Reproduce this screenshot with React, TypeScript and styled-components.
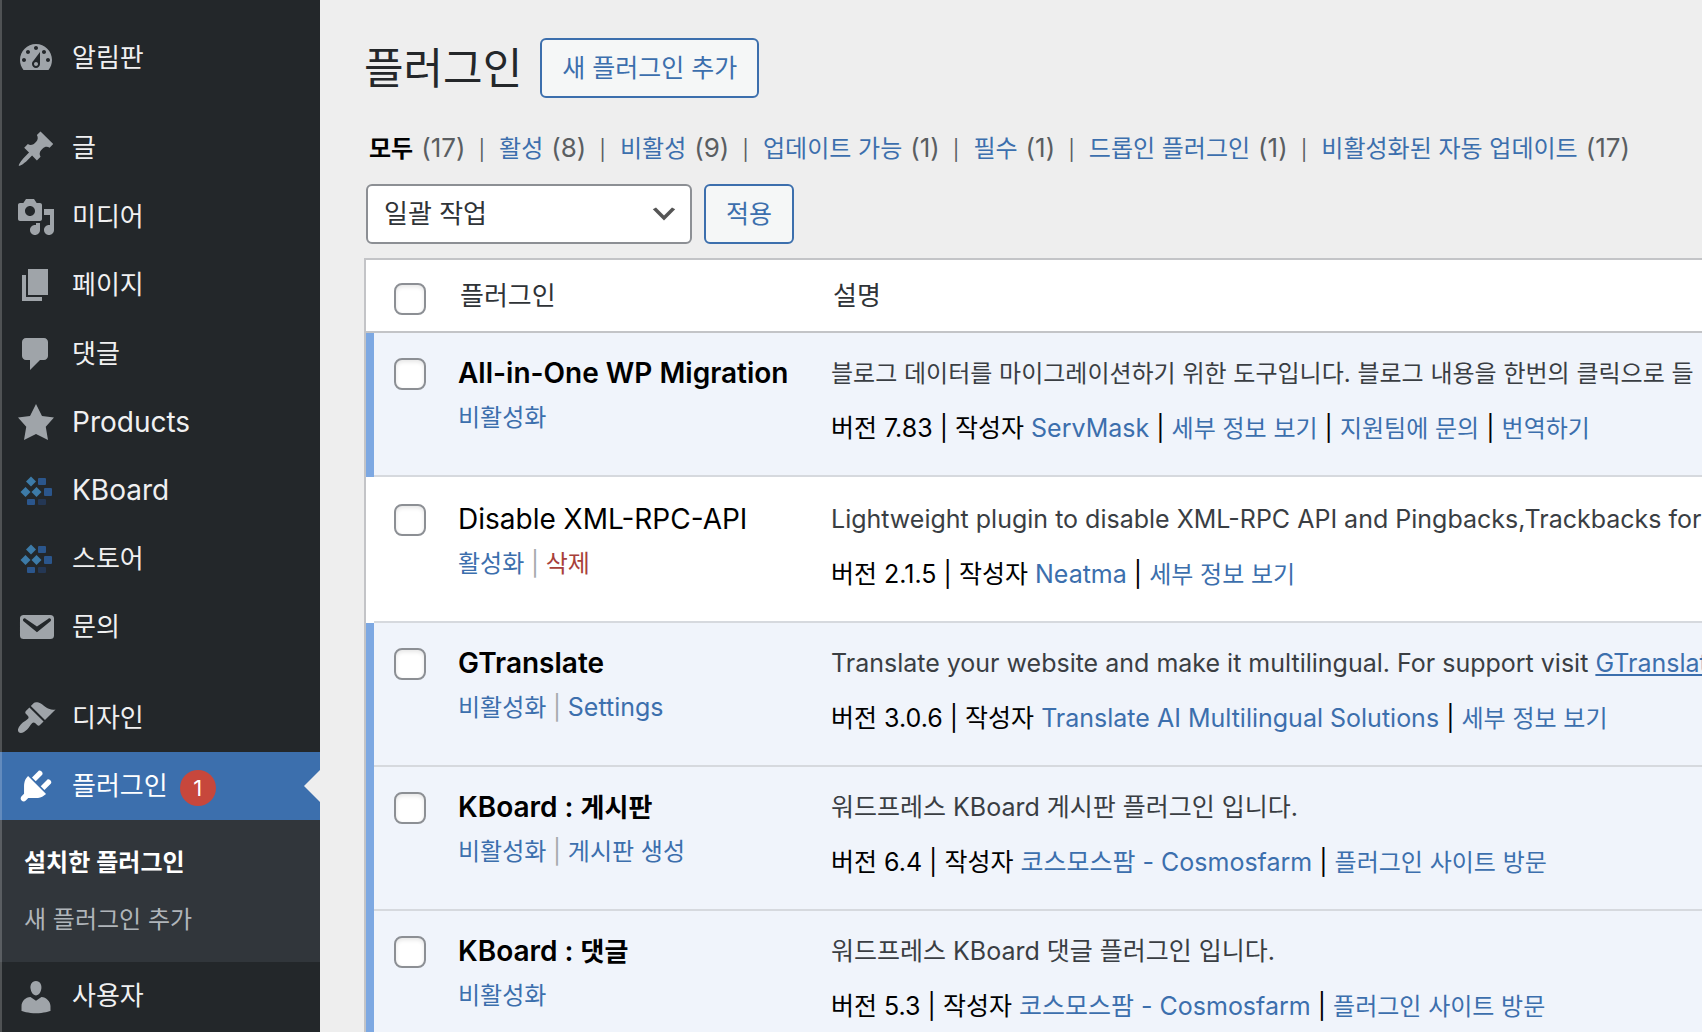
import React from "react";
import styled, { createGlobalStyle, css } from "styled-components";

const family = `Inter, "Noto Sans CJK KR", sans-serif`;

const GlobalStyle = createGlobalStyle`
  *, *::before, *::after { box-sizing: border-box; }
  html, body { margin: 0; }
  body {
    background: #eeeeee;
    color: #3a3e43;
    font-family: ${family};
    font-size: 25px;
    line-height: 39px;
    overflow: hidden;
  }
  a { text-decoration: none; }
`;

const Page = styled.div`
  display: flex;
  height: 100vh;
  overflow: hidden;
`;

const Sidebar = styled.nav`
  position: relative;
  flex: 0 0 320px;
  padding-top: 24px;
  background: #23272a;
  overflow: hidden;

  &::after {
    content: "";
    position: absolute;
    inset: 0 auto 0 0;
    width: 2px;
    background: rgba(255, 255, 255, 0.2);
  }
`;

const MenuList = styled.ul`
  list-style: none;
  margin: 0;
  padding: 0;
`;

const MenuItem = styled.li<{ $spaced?: boolean }>`
  margin-top: ${(p) => (p.$spaced ? "22px" : "0")};
`;

const MenuLink = styled.a<{ $current?: boolean }>`
  position: relative;
  display: flex;
  align-items: center;
  gap: 16px;
  padding: 16px;
  font-size: 28px;
  line-height: 1.3em;
  color: ${(p) => (p.$current ? "#ffffff" : "#f0f0f1")};
  background: ${(p) => (p.$current ? "#3c6fad" : "transparent")};

  svg {
    flex: none;
    width: 40px;
    height: 40px;
    margin: -2px 0;
    fill: ${(p) => (p.$current ? "#ffffff" : "#9fa4a9")};
  }

  ${(p) =>
    p.$current &&
    css`
      &::after {
        content: "";
        position: absolute;
        right: 0;
        top: 50%;
        margin-top: -16px;
        border: 16px solid transparent;
        border-left-width: 0;
        border-right-color: #eeeeee;
      }
    `}
`;

const MenuText = styled.span<{ $latin?: boolean }>`
  font-size: ${(p) => (p.$latin ? "28px" : "26px")};
`;

const Badge = styled.span`
  display: grid;
  place-items: center;
  width: 36px;
  height: 36px;
  margin: 2px 0 -2px -4px;
  border-radius: 50%;
  background: #c7473c;
  color: #fff;
  font-size: 22px;
`;

const Submenu = styled.ul`
  list-style: none;
  margin: 0;
  padding: 14px 0;
  background: #31363b;
`;

const SubLink = styled.a<{ $current?: boolean }>`
  display: block;
  padding: 9px 24px;
  font-size: 24px;
  line-height: 39px;
  font-weight: ${(p) => (p.$current ? 600 : 400)};
  color: ${(p) => (p.$current ? "#ffffff" : "#b0b5ba")};
`;

const Main = styled.main`
  flex: 1;
  min-width: 0;
  padding: 38px 0 0 44px;
  overflow: hidden;
`;

const Heading = styled.header`
  display: flex;
  align-items: center;
  gap: 18px;
`;

const Title = styled.h1`
  margin: 0;
  font-size: 43px;
  line-height: 60px;
  font-weight: 400;
  color: #24272a;
`;

const ActionButton = styled.button`
  height: 60px;
  padding: 0 20px;
  border: 2px solid #3c6fad;
  border-radius: 6px;
  background: #f5f7f7;
  color: #3c6fad;
  font: 25px/36px ${family};
`;

const Filters = styled.ul`
  display: flex;
  list-style: none;
  margin: 31px 0 16px;
  padding: 0 0 0 5px;
  white-space: nowrap;
  font-size: 24px;
  color: #5a5e62;

  li + li::before {
    content: "|";
    margin: 0 14px 0 13px;
    font-size: 20px;
    line-height: 1;
  }
`;

const FilterLink = styled.a<{ $current?: boolean }>`
  margin-right: 8px;
  color: ${(p) => (p.$current ? "#000000" : "#3c6fad")};
  font-weight: ${(p) => (p.$current ? 600 : 400)};
`;

const Count = styled.span`
  font-size: 26px;
  line-height: 1;
`;

const Bulk = styled.form`
  display: flex;
  gap: 12px;
  margin: 0 0 14px 2px;
`;

const SelectBox = styled.div`
  position: relative;
  width: 326px;

  svg {
    position: absolute;
    right: 12px;
    top: 14px;
    width: 32px;
    height: 32px;
    fill: #555555;
    pointer-events: none;
  }
`;

const Select = styled.select`
  appearance: none;
  width: 100%;
  height: 60px;
  padding: 0 48px 0 16px;
  border: 2px solid #8c8f94;
  border-radius: 6px;
  background: #ffffff;
  color: #2f3337;
  font: 26px/56px ${family};
`;

const Table = styled.table`
  width: 100%;
  table-layout: fixed;
  border-collapse: separate;
  border-spacing: 0;
  border: 2px solid #c3c4c7;
  border-right: 0;
  background: #ffffff;
  white-space: nowrap;
`;

const CheckCol = styled.col`
  width: 72px;
`;

const NameCol = styled.col`
  width: 373px;
`;

const HeadCell = styled.th`
  height: 73px;
  padding: 0 0 0 22px;
  border-bottom: 2px solid #c3c4c7;
  text-align: left;
  vertical-align: middle;
  font-size: 26px;
  font-weight: 400;
  color: #2f3337;
`;

const HeadCheck = styled(HeadCell)`
  padding: 6px 0 0 28px;
`;

const CheckCell = styled.th`
  padding: 25px 0 29px 20px;
  text-align: left;
  vertical-align: top;
`;

const Cell = styled.td`
  padding: 21px 0 29px 20px;
  vertical-align: top;
  overflow: hidden;
`;

const Row = styled.tr<{ $active: boolean }>`
  background: ${(p) => (p.$active ? "#f0f4fb" : "#ffffff")};

  && > * {
    border-top: ${(p) => (p.$active ? "0" : "2px solid #ffffff")};
    box-shadow: inset 0 -2px 0 #d6d9de;
  }

  && > ${CheckCell} {
    border-left: 8px solid ${(p) => (p.$active ? "#7da8e2" : "#ffffff")};
  }
`;

const Check = styled.input`
  appearance: none;
  display: block;
  width: 32px;
  height: 32px;
  margin: 0;
  border: 2px solid #8c8f94;
  border-radius: 8px;
  background: #ffffff;
  box-shadow: inset 0 2px 4px rgba(0, 0, 0, 0.1);
`;

const Name = styled.strong<{ $active: boolean }>`
  display: block;
  margin-bottom: 5px;
  font-size: 28px;
  font-weight: ${(p) => (p.$active ? 600 : 400)};
  color: #000000;
`;

const NameKorean = styled.span`
  font-size: 26px;
  line-height: 1;
`;

const Actions = styled.div`
  font-size: 24px;
  color: #a7aaad;
`;

/* Hangul is drawn larger than Latin at the same size, so all-Korean text is set one step down. */
const textSize = (text: string) => (/[A-Za-z]/.test(text) ? "25px" : "24px");

const Link = styled.a<{ $size: string; $danger?: boolean; $underline?: boolean }>`
  font-size: ${(p) => p.$size};
  line-height: 1;
  color: ${(p) => (p.$danger ? "#a8403a" : "#3c6fad")};
  text-decoration: ${(p) => (p.$underline ? "underline" : "none")};
`;

const Desc = styled.p<{ $size: string }>`
  margin: 0 0 16px;
  font-size: ${(p) => p.$size};
  color: #3a3e43;
`;

const Meta = styled.div`
  color: #000000;
`;

const paths = {
  dashboard:
    "M3.76 16h12.48c1.1-1.37 1.76-3.11 1.76-5 0-4.42-3.58-8-8-8s-8 3.58-8 8c0 1.89.66 3.63 1.76 5zM10 4c.55 0 1 .45 1 1s-.45 1-1 1-1-.45-1-1 .45-1 1-1zM6 6c.55 0 1 .45 1 1s-.45 1-1 1-1-.45-1-1 .45-1 1-1zm8 0c.55 0 1 .45 1 1s-.45 1-1 1-1-.45-1-1 .45-1 1-1zm-5.37 5.55L12 7v6c0 1.1-.9 2-2 2s-2-.9-2-2c0-.57.24-1.08.63-1.45zM4 10c.55 0 1 .45 1 1s-.45 1-1 1-1-.45-1-1 .45-1 1-1zm12 0c.55 0 1 .45 1 1s-.45 1-1 1-1-.45-1-1 .45-1 1-1zm-5 3c0-.55-.45-1-1-1s-1 .45-1 1 .45 1 1 1 1-.45 1-1z",
  pin: "M10.44 3.02l1.82-1.82 6.36 6.35-1.83 1.82c-1.05-.68-2.48-.57-3.41.36l-.75.75c-.92.93-1.04 2.35-.35 3.41l-1.83 1.82-2.41-2.41-2.8 2.79c-.42.42-3.38 2.71-3.8 2.29s1.86-3.39 2.28-3.81l2.79-2.79L4.1 9.36l1.83-1.82c1.05.69 2.48.57 3.4-.36l.75-.75c.93-.92 1.05-2.35.36-3.41z",
  media:
    "M13 11V4c0-.55-.45-1-1-1h-1.67L9 1H5L3.67 3H2c-.55 0-1 .45-1 1v7c0 .55.45 1 1 1h10c.55 0 1-.45 1-1zM7 4.5c1.38 0 2.5 1.12 2.5 2.5S8.38 9.5 7 9.5 4.5 8.38 4.5 7 5.62 4.5 7 4.5zM14 6h5v10.5c0 1.38-1.12 2.5-2.5 2.5S14 17.88 14 16.5s1.12-2.5 2.5-2.5c.17 0 .34.02.5.05V9h-3V6zm-4 8.05V13h2v3.5c0 1.38-1.12 2.5-2.5 2.5S7 17.88 7 16.5 8.12 14 9.5 14c.17 0 .34.02.5.05z",
  page: "M6 15V2h10v13H6zm-1 1h8v2H3V5h2v11z",
  comment:
    "M5 2h9c1.1 0 2 .9 2 2v7c0 1.1-.9 2-2 2h-2l-5 5v-5H5c-1.1 0-2-.9-2-2V4c0-1.1.9-2 2-2z",
  star: "M10 1l3 6 6 .75-4.12 4.62L16 19l-6-3-6 3 1.13-6.63L1 7.75 7 7z",
  email:
    "M3.87 4h13.25C18.37 4 19 4.59 19 5.79v8.42c0 1.19-.63 1.79-1.88 1.79H3.87c-1.25 0-1.88-.6-1.88-1.79V5.79c0-1.2.63-1.79 1.88-1.79zm6.62 8.6l6.74-5.53c.24-.2.43-.66.13-1.07-.29-.41-.82-.42-1.17-.17l-5.7 3.86L4.8 5.83c-.35-.25-.88-.24-1.17.17-.3.41-.11.87.13 1.07z",
  brush:
    "M14.48 11.06L7.41 3.99l1.5-1.5c.5-.56 2.3-.47 3.51.32 1.21.8 1.43 1.28 2.91 2.1 1.18.64 2.45 1.26 4.45.85zm-.71.71L6.7 4.7 4.93 6.47c-.39.39-.39 1.02 0 1.41l1.06 1.06c.39.39.39 1.03 0 1.42-.6.6-1.43 1.11-2.21 1.69-.35.26-.7.53-1.01.84C1.43 14.23.4 16.08 1.4 17.07c.99 1 2.84-.03 4.18-1.36.31-.31.58-.66.85-1.02.57-.78 1.08-1.61 1.69-2.21.39-.39 1.02-.39 1.41 0l1.06 1.06c.39.39 1.02.39 1.41 0z",
  plug: "M13.11 4.36L9.87 7.6 8 5.73l3.24-3.24c.35-.34 1.05-.2 1.56.32.52.51.66 1.21.31 1.55zm-8 1.77l.91-1.12 9.01 9.01-1.19.84c-.71.71-2.63 1.16-3.82 1.16H6.14L4.9 17.26c-.59.59-1.54.59-2.12 0-.59-.58-.59-1.53 0-2.12l1.24-1.24v-3.88c0-1.13.4-3.19 1.09-3.89zm7.26 3.97l3.24-3.24c.34-.35 1.04-.21 1.55.31.52.51.66 1.21.31 1.55l-3.24 3.25z",
  user: "M10 9.25c-2.27 0-2.73-3.44-2.73-3.44C7 4.02 7.82 2 9.97 2c2.16 0 2.98 2.02 2.71 3.81 0 0-.41 3.44-2.68 3.44zm0 2.57L12.72 10c2.39 0 4.52 2.33 4.52 4.53v2.49s-3.65 1.13-7.24 1.13c-3.65 0-7.24-1.13-7.24-1.13v-2.49c0-2.25 1.94-4.48 4.47-4.48z",
};

type IconName = keyof typeof paths | "kboard";

function Icon({ name }: { name: IconName }) {
  if (name === "kboard") {
    return (
      <svg viewBox="0 0 40 40" aria-hidden="true">
        <g fill="#3d7ba8">
          <path d="M15 5.500l5 5-5 5-5-5z" />
          <path d="M9.500 16l5 5-5 5-5-5z" />
          <path d="M20.500 16l5 5-5 5-5-5z" />
        </g>
        <g fill="#2b568c">
          <rect x="22" y="7" width="8" height="7" rx="1" />
          <rect x="28" y="17" width="8" height="8" rx="1" />
          <rect x="11" y="28" width="8" height="6" rx="1" />
        </g>
        <rect x="22" y="28" width="8" height="6" rx="1" fill="#243754" />
      </svg>
    );
  }
  return (
    <svg viewBox="0 0 20 20" aria-hidden="true">
      <path d={paths[name]} />
    </svg>
  );
}

type MenuEntry = {
  icon: IconName;
  label: string;
  latin?: boolean;
  spaced?: boolean;
  current?: boolean;
  badge?: string;
  children?: string[];
};

const menu: MenuEntry[] = [
  { icon: "dashboard", label: "알림판" },
  { icon: "pin", label: "글", spaced: true },
  { icon: "media", label: "미디어" },
  { icon: "page", label: "페이지" },
  { icon: "comment", label: "댓글" },
  { icon: "star", label: "Products", latin: true },
  { icon: "kboard", label: "KBoard", latin: true },
  { icon: "kboard", label: "스토어" },
  { icon: "email", label: "문의" },
  { icon: "brush", label: "디자인", spaced: true },
  {
    icon: "plug",
    label: "플러그인",
    current: true,
    badge: "1",
    children: ["설치한 플러그인", "새 플러그인 추가"],
  },
  { icon: "user", label: "사용자" },
];

const filters: [string, number][] = [
  ["모두", 17],
  ["활성", 8],
  ["비활성", 9],
  ["업데이트 가능", 1],
  ["필수", 1],
  ["드롭인 플러그인", 1],
  ["비활성화된 자동 업데이트", 17],
];

type Plugin = {
  name: string;
  nameKorean?: string;
  active: boolean;
  actions: string[];
  desc: string;
  descLink?: string;
  version: string;
  author: string;
  links: string[];
};

const plugins: Plugin[] = [
  {
    name: "All-in-One WP Migration",
    active: true,
    actions: ["비활성화"],
    desc: "블로그 데이터를 마이그레이션하기 위한 도구입니다. 블로그 내용을 한번의 클릭으로 들",
    version: "7.83",
    author: "ServMask",
    links: ["세부 정보 보기", "지원팀에 문의", "번역하기"],
  },
  {
    name: "Disable XML-RPC-API",
    active: false,
    actions: ["활성화", "삭제"],
    desc: "Lightweight plugin to disable XML-RPC API and Pingbacks,Trackbacks for",
    version: "2.1.5",
    author: "Neatma",
    links: ["세부 정보 보기"],
  },
  {
    name: "GTranslate",
    active: true,
    actions: ["비활성화", "Settings"],
    desc: "Translate your website and make it multilingual. For support visit ",
    descLink: "GTranslate",
    version: "3.0.6",
    author: "Translate AI Multilingual Solutions",
    links: ["세부 정보 보기"],
  },
  {
    name: "KBoard : ",
    nameKorean: "게시판",
    active: true,
    actions: ["비활성화", "게시판 생성"],
    desc: "워드프레스 KBoard 게시판 플러그인 입니다.",
    version: "6.4",
    author: "코스모스팜 - Cosmosfarm",
    links: ["플러그인 사이트 방문"],
  },
  {
    name: "KBoard : ",
    nameKorean: "댓글",
    active: true,
    actions: ["비활성화"],
    desc: "워드프레스 KBoard 댓글 플러그인 입니다.",
    version: "5.3",
    author: "코스모스팜 - Cosmosfarm",
    links: ["플러그인 사이트 방문"],
  },
];

function PluginRow({ plugin: p }: { plugin: Plugin }) {
  return (
    <Row $active={p.active}>
      <CheckCell scope="row">
        <Check type="checkbox" aria-label={p.name + (p.nameKorean ?? "")} />
      </CheckCell>
      <Cell>
        <Name $active={p.active}>
          {p.name}
          {p.nameKorean && <NameKorean>{p.nameKorean}</NameKorean>}
        </Name>
        <Actions>
          {p.actions.map((a, i) => (
            <React.Fragment key={a}>
              {i > 0 && " | "}
              <Link href="#" $size={textSize(a)} $danger={a === "삭제"}>
                {a}
              </Link>
            </React.Fragment>
          ))}
        </Actions>
      </Cell>
      <Cell>
        <Desc $size={textSize(p.desc)}>
          {p.desc}
          {p.descLink && (
            <Link href="#" $size={textSize(p.descLink)} $underline>
              {p.descLink}
            </Link>
          )}
        </Desc>
        <Meta>
          버전 {p.version} | 작성자{" "}
          <Link href="#" $size={textSize(p.author)}>
            {p.author}
          </Link>
          {p.links.map((l) => (
            <React.Fragment key={l}>
              {" | "}
              <Link href="#" $size={textSize(l)}>
                {l}
              </Link>
            </React.Fragment>
          ))}
        </Meta>
      </Cell>
    </Row>
  );
}

export default function App() {
  return (
    <>
      <GlobalStyle />
      <Page lang="ko">
        <Sidebar aria-label="관리자 메뉴">
          <MenuList>
            {menu.map((m) => (
              <MenuItem key={m.label} $spaced={m.spaced}>
                <MenuLink href="#" $current={m.current}>
                  <Icon name={m.icon} />
                  <MenuText $latin={m.latin}>{m.label}</MenuText>
                  {m.badge && <Badge>{m.badge}</Badge>}
                </MenuLink>
                {m.children && (
                  <Submenu>
                    {m.children.map((c, i) => (
                      <li key={c}>
                        <SubLink href="#" $current={i === 0}>
                          {c}
                        </SubLink>
                      </li>
                    ))}
                  </Submenu>
                )}
              </MenuItem>
            ))}
          </MenuList>
        </Sidebar>
        <Main>
          <Heading>
            <Title>플러그인</Title>
            <ActionButton type="button">새 플러그인 추가</ActionButton>
          </Heading>
          <Filters>
            {filters.map(([label, count], i) => (
              <li key={label}>
                <FilterLink href="#" $current={i === 0}>
                  {label}
                </FilterLink>
                <Count>({count})</Count>
              </li>
            ))}
          </Filters>
          <Bulk>
            <SelectBox>
              <Select aria-label="일괄 작업 선택">
                <option>일괄 작업</option>
              </Select>
              <svg viewBox="0 0 20 20" aria-hidden="true">
                <path d="M5 6l5 5 5-5 2 1-7 7-7-7 2-1z" />
              </svg>
            </SelectBox>
            <ActionButton type="button">적용</ActionButton>
          </Bulk>
          <Table>
            <colgroup>
              <CheckCol />
              <NameCol />
              <col />
            </colgroup>
            <thead>
              <tr>
                <HeadCheck scope="col">
                  <Check type="checkbox" aria-label="모두 선택" />
                </HeadCheck>
                <HeadCell scope="col">플러그인</HeadCell>
                <HeadCell scope="col">설명</HeadCell>
              </tr>
            </thead>
            <tbody>
              {plugins.map((p) => (
                <PluginRow key={p.name + p.version} plugin={p} />
              ))}
            </tbody>
          </Table>
        </Main>
      </Page>
    </>
  );
}
